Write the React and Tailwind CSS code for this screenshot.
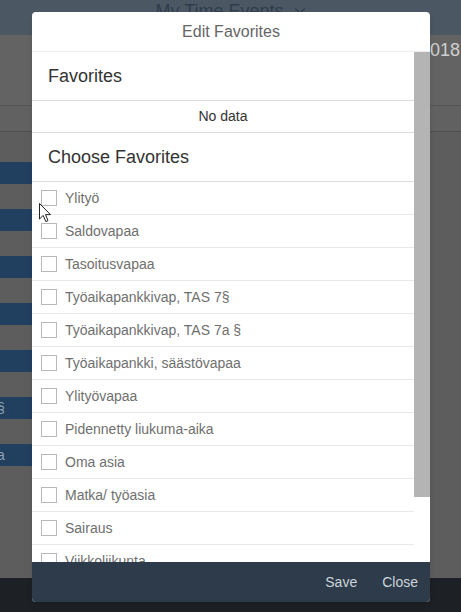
import { ChevronDown } from 'lucide-react'

const items = [
  'Ylityö',
  'Saldovapaa',
  'Tasoitusvapaa',
  'Työaikapankkivap, TAS 7§',
  'Työaikapankkivap, TAS 7a §',
  'Työaikapankki, säästövapaa',
  'Ylityövapaa',
  'Pidennetty liukuma-aika',
  'Oma asia',
  'Matka/ työasia',
  'Sairaus',
  'Viikkoliikunta',
]

const bars = ['', '', '', '', '', '§', 'a']

function Background() {
  return (
    <div className="flex h-full flex-col">
      {/* top bar */}
      <div className="flex h-[35px] shrink-0 items-start justify-center bg-[#4c5764] pl-[4px] pt-[1px]">
        <span className="text-[18px] leading-[20px] text-[#2f3d4c]">My Time Events</span>
        <ChevronDown className="ml-[6px] mt-[1px] h-[18px] w-[20px] text-[#2f3d4c]" strokeWidth={1.5} />
      </div>
      <div className="flex h-[71px] shrink-0 justify-end border-b border-[#555] bg-[#636363]">
        <span className="mr-[1px] mt-[5px] text-[18px] leading-[20px] text-[#cfcfcf]">2018</span>
      </div>
      <div className="h-[26px] shrink-0 border-b border-[#4e4e4e] bg-[#616161]" />
      <div className="flex flex-1 flex-col gap-[25px] bg-[#5d5d5d] pt-[30px]">
        {bars.map((t, i) => (
          <div key={i} className="flex h-[22px] w-[380px] items-center bg-[#21405f] text-[14px] text-[#8fa0b2]">
            {t && <span className="ml-[-3px]">{t}</span>}
          </div>
        ))}
      </div>
      <div className="h-[34px] shrink-0 bg-[#1d2125]" />
    </div>
  )
}

function Checkbox() {
  return <span className="h-[16px] w-[16px] shrink-0 border border-[#b8b8b8] bg-white" />
}

export default function App() {
  return (
    <div className="relative h-[612px] w-[461px] overflow-hidden font-['Liberation_Sans',Arial,sans-serif]">
      <Background />

      {/* dialog */}
      <div className="absolute left-[32px] top-[12px] flex h-[590px] w-[398px] flex-col overflow-hidden rounded-[4px] bg-white shadow-md">
        <div className="flex h-[40px] shrink-0 items-center justify-center border-b border-[#ececec] text-[16px] text-[#666]">
          Edit Favorites
        </div>

        <div className="flex min-h-0 flex-1">
          <div className="min-w-0 flex-1 overflow-hidden">
            <div className="flex h-[49px] items-center border-b border-[#dcdcdc] px-[16px] text-[18px] text-[#333]">
              Favorites
            </div>
            <div className="flex h-[32px] items-center justify-center border-b border-[#dcdcdc] text-[14px] text-[#333]">
              No data
            </div>
            <div className="flex h-[49px] items-center border-b border-[#dcdcdc] px-[16px] text-[18px] text-[#333]">
              Choose Favorites
            </div>
            {items.map((item) => (
              <div key={item} className="flex h-[33px] items-center gap-[8px] border-b border-[#e8e8e8] pl-[9px] text-[14px] text-[#6f6f6f]">
                <Checkbox />
                <span>{item}</span>
              </div>
            ))}
          </div>
          <div className="w-[16px] shrink-0 bg-white">
            <div className="h-[445px] bg-[#b4b4b4]" />
          </div>
        </div>

        <div className="flex h-[40px] shrink-0 items-center justify-end gap-[25px] bg-[#2e3b4a] pr-[12px] text-[14px] text-[#ccd4dc]">
          <span>Save</span>
          <span>Close</span>
        </div>
      </div>

      {/* mouse pointer */}
      <svg className="absolute left-[39px] top-[203px]" width="13" height="20" viewBox="0 0 13 20">
        <path d="M0.5 0.5 L0.5 16 L4.2 12.4 L6.8 18.6 L9 17.6 L6.5 11.6 L11.5 11.6 Z" fill="#fff" stroke="#222" strokeWidth="1" />
      </svg>
    </div>
  )
}
